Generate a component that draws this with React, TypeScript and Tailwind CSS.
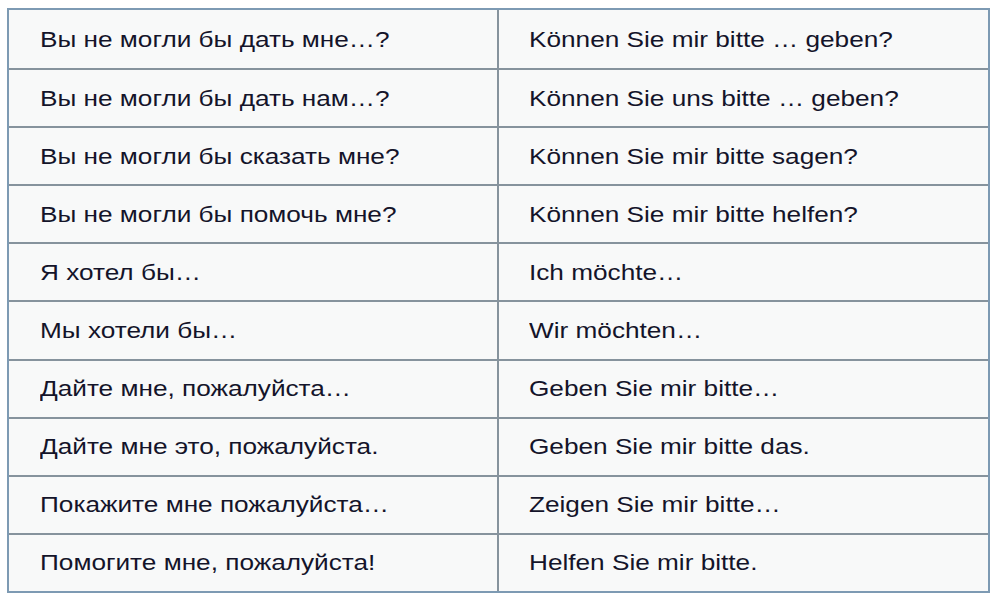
const ROWS: [string, string][] = [
  ["Вы не могли бы дать мне…?", "Können Sie mir bitte … geben?"],
  ["Вы не могли бы дать нам…?", "Können Sie uns bitte … geben?"],
  ["Вы не могли бы сказать мне?", "Können Sie mir bitte sagen?"],
  ["Вы не могли бы помочь мне?", "Können Sie mir bitte helfen?"],
  ["Я хотел бы…", "Ich möchte…"],
  ["Мы хотели бы…", "Wir möchten…"],
  ["Дайте мне, пожалуйста…", "Geben Sie mir bitte…"],
  ["Дайте мне это, пожалуйста.", "Geben Sie mir bitte das."],
  ["Покажите мне пожалуйста…", "Zeigen Sie mir bitte…"],
  ["Помогите мне, пожалуйста!", "Helfen Sie mir bitte."],
];

export default function App() {
  return (
    <div className="w-[992px] h-[596px] bg-white pl-[7px] pt-[8px]">
      <div
        className="w-[983px] h-[585px] border-2 border-[#7d9ab3] bg-[#f8f9f9] grid grid-rows-10 text-[#14142a] text-[22px]"
        style={{ fontFamily: '"Liberation Sans", Arial, sans-serif' }}
      >
        {ROWS.map(([ru, de], i) => (
          <div
            key={i}
            className={`grid grid-cols-[490px_1fr] ${i > 0 ? "border-t-2 border-[#86939d]" : ""}`}
          >
            <div className="flex items-center pl-[31px] border-r-2 border-[#86939d] whitespace-nowrap">
              <span className="inline-block origin-left scale-x-[1.19]">{ru}</span>
            </div>
            <div className="flex items-center pl-[30px] whitespace-nowrap">
              <span className="inline-block origin-left scale-x-[1.19]">{de}</span>
            </div>
          </div>
        ))}
      </div>
    </div>
  );
}
